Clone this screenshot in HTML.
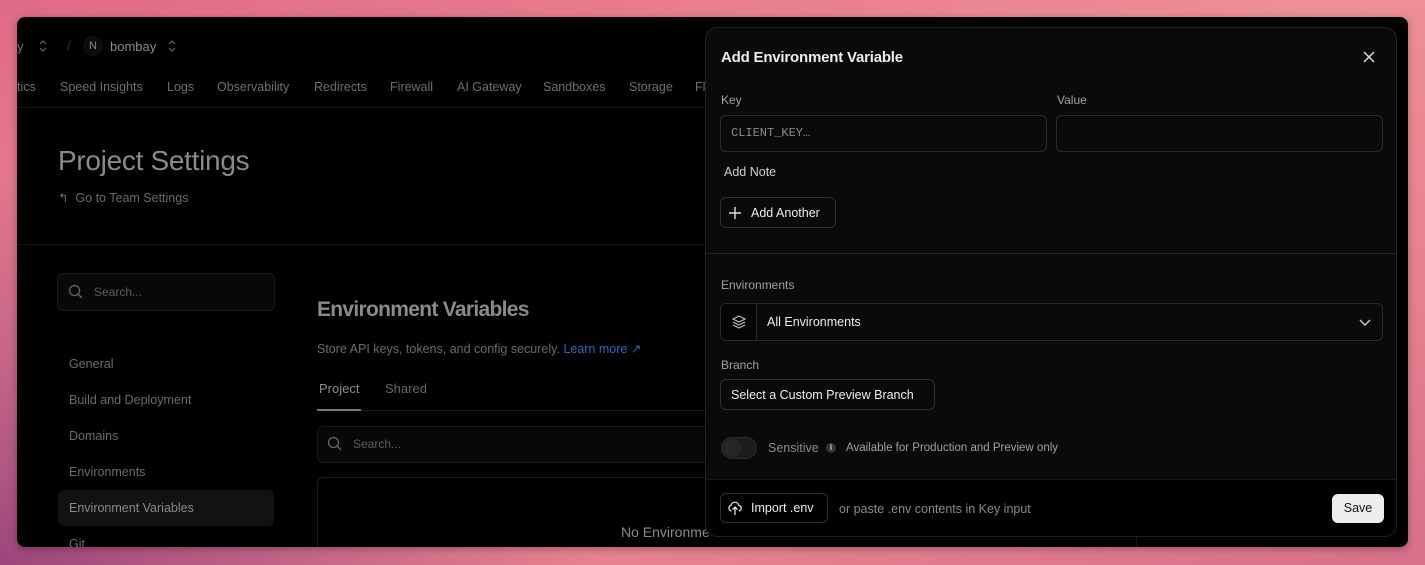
<!DOCTYPE html>
<html><head><meta charset="utf-8"><style>
*{box-sizing:border-box;margin:0;padding:0}
body{width:1425px;height:565px;overflow:hidden;font-family:"Liberation Sans",sans-serif;background:linear-gradient(160deg,#e06a86 0%,#ee8f96 45%,#e9838f 70%,#d8708a 100%);position:relative}
.bgl{position:absolute;left:0;top:0;width:1425px;height:565px;background:radial-gradient(ellipse 600px 400px at 0% 100%,rgba(130,45,115,.75),rgba(130,45,115,0))}
.win{position:absolute;left:17px;top:17px;width:1391px;height:530px;background:#000;border-radius:8px;overflow:hidden;box-shadow:0 2px 8px rgba(0,0,0,.3)}
.a{position:absolute;white-space:nowrap}
.nav{color:#6e6e6e;font-size:12.5px;top:63px}
.side{color:#6a6a6a;font-size:12.5px;left:52px}
.modal{position:absolute;left:688px;top:10px;width:692px;height:510px;background:#0a0a0a;border:1px solid #222;border-radius:12px;overflow:hidden}
.lbl{color:#a1a1a1;font-size:12px}
.inp{position:absolute;border:1px solid #2a2a2a;border-radius:6px;background:#0a0a0a}
.btn{position:absolute;border:1px solid #2e2e2e;border-radius:6px;background:#0a0a0a;color:#ededed;font-size:12.5px}
</style></head><body>
<div class="bgl"></div>
<div class="win">
 <div class="a" style="left:0;top:22px;color:#777;font-size:13px">y</div>
 <svg class="a" style="left:21px;top:22px" width="10" height="14" viewBox="0 0 10 14"><path d="M2 5L5 2L8 5M2 9L5 12L8 9" fill="none" stroke="#666" stroke-width="1.2"/></svg>
 <div class="a" style="left:50px;top:20px;color:#333;font-size:14px">/</div>
 <div class="a" style="left:66px;top:19px;width:20px;height:20px;border-radius:50%;background:#0d0d0d;color:#888;font-size:11px;text-align:center;line-height:20px">N</div>
 <div class="a" style="left:93px;top:22px;color:#8a8a8a;font-size:13px">bombay</div>
 <svg class="a" style="left:150px;top:22px" width="10" height="14" viewBox="0 0 10 14"><path d="M2 5L5 2L8 5M2 9L5 12L8 9" fill="none" stroke="#666" stroke-width="1.2"/></svg>
 <div class="a nav" style="left:0">tics</div>
 <div class="a nav" style="left:43px">Speed Insights</div>
 <div class="a nav" style="left:150px">Logs</div>
 <div class="a nav" style="left:200px">Observability</div>
 <div class="a nav" style="left:297px">Redirects</div>
 <div class="a nav" style="left:373px">Firewall</div>
 <div class="a nav" style="left:440px">AI Gateway</div>
 <div class="a nav" style="left:526px">Sandboxes</div>
 <div class="a nav" style="left:612px">Storage</div>
 <div class="a nav" style="left:678px">Fl</div>
 <div class="a" style="left:0;top:90px;width:700px;height:1px;background:#151515"></div>
 <div class="a" style="left:41px;top:128px;color:#8a8a8a;font-size:28px;letter-spacing:-.3px">Project Settings</div>
 <div class="a" style="left:41px;top:173px;color:#6a6a6a;font-size:12.5px">↰&nbsp; Go to Team Settings</div>
 <div class="a" style="left:0;top:227px;width:700px;height:1px;background:#151515"></div>
 <div class="a" style="left:40px;top:256px;width:218px;height:38px;border:1px solid #1a1a1a;border-radius:6px;background:#080808"></div>
 <svg class="a" style="left:51px;top:267px" width="15" height="15" viewBox="0 0 15 15"><circle cx="6.5" cy="6.5" r="5" fill="none" stroke="#666" stroke-width="1.3"/><path d="M10 10L14 14" stroke="#666" stroke-width="1.3"/></svg>
 <div class="a" style="left:77px;top:268px;color:#5e5e5e;font-size:12px">Search...</div>
 <div class="a side" style="top:340px">General</div>
 <div class="a side" style="top:376px">Build and Deployment</div>
 <div class="a side" style="top:412px">Domains</div>
 <div class="a side" style="top:448px">Environments</div>
 <div class="a" style="left:41px;top:473px;width:216px;height:36px;background:#121212;border-radius:6px"></div>
 <div class="a side" style="top:484px;color:#8a8a8a">Environment Variables</div>
 <div class="a side" style="top:520px">Git</div>
 <div class="a" style="left:300px;top:281px;color:#8a8a8a;font-size:21px;font-weight:bold;letter-spacing:-.7px">Environment Variables</div>
 <div class="a" style="left:300px;top:324px;color:#6a6a6a;font-size:12.5px">Store API keys, tokens, and config securely. <span style="color:#2a6bb8">Learn more ↗</span></div>
 <div class="a" style="left:302px;top:364px;color:#8a8a8a;font-size:13px">Project</div>
 <div class="a" style="left:368px;top:364px;color:#666;font-size:13px">Shared</div>
 <div class="a" style="left:300px;top:393px;width:400px;height:1px;background:#1a1a1a"></div>
 <div class="a" style="left:300px;top:392px;width:44px;height:2px;background:#777"></div>
 <div class="a" style="left:300px;top:409px;width:400px;height:37px;border:1px solid #1a1a1a;border-radius:6px;background:#080808"></div>
 <svg class="a" style="left:310px;top:419px" width="15" height="15" viewBox="0 0 15 15"><circle cx="6.5" cy="6.5" r="5" fill="none" stroke="#666" stroke-width="1.3"/><path d="M10 10L14 14" stroke="#666" stroke-width="1.3"/></svg>
 <div class="a" style="left:336px;top:420px;color:#5e5e5e;font-size:12px">Search...</div>
 <div class="a" style="left:300px;top:460px;width:820px;height:80px;border:1px solid #1a1a1a;border-radius:6px"></div>
 <div class="a" style="left:604px;top:507px;color:#8a8a8a;font-size:14px">No Environme</div>
 <div class="modal">
  <div class="a" style="left:15px;top:21px;color:#ededed;font-size:15px;font-weight:bold;letter-spacing:-.2px">Add Environment Variable</div>
  <svg class="a" style="left:656px;top:22px" width="14" height="14" viewBox="0 0 14 14"><path d="M2 2L12 12M12 2L2 12" stroke="#ddd" stroke-width="1.5"/></svg>
  <div class="a lbl" style="left:15px;top:65px">Key</div>
  <div class="a lbl" style="left:351px;top:65px">Value</div>
  <div class="inp" style="left:14px;top:87px;width:327px;height:37px"></div>
  <div class="a" style="left:25px;top:98px;color:#8a8a8a;font-size:12px;font-family:'Liberation Mono',monospace">CLIENT_KEY…</div>
  <div class="inp" style="left:350px;top:87px;width:327px;height:37px"></div>
  <div class="a" style="left:18px;top:137px;color:#cfcfcf;font-size:12.5px">Add Note</div>
  <div class="btn" style="left:14px;top:169px;width:116px;height:31px"><svg class="a" style="left:7px;top:8px" width="14" height="14" viewBox="0 0 14 14"><path d="M7 1V13M1 7H13" stroke="#ddd" stroke-width="1.4"/></svg><span class="a" style="left:30px;top:8px">Add Another</span></div>
  <div class="a" style="left:0;top:225px;width:692px;height:1px;background:#262626"></div>
  <div class="a lbl" style="left:15px;top:250px">Environments</div>
  <div class="inp" style="left:14px;top:275px;width:663px;height:38px;overflow:hidden"><div class="a" style="left:0;top:0;width:36px;height:38px;background:#050505;border-right:1px solid #2a2a2a"></div>
   <svg class="a" style="left:10px;top:11px" width="16" height="14" viewBox="0 0 16 14"><path d="M8 1L14 4L8 7L2 4Z M2 7L8 10L14 7 M2 10L8 13L14 10" fill="none" stroke="#bbb" stroke-width="1.2"/></svg>
   <span class="a" style="left:46px;top:11px;color:#ededed;font-size:12.5px">All Environments</span>
   <svg class="a" style="left:638px;top:13px" width="12" height="10" viewBox="0 0 12 10"><path d="M1 3L6 8L11 3" fill="none" stroke="#ccc" stroke-width="1.4"/></svg></div>
  <div class="a lbl" style="left:15px;top:330px">Branch</div>
  <div class="btn" style="left:14px;top:351px;width:215px;height:31px"><span class="a" style="left:10px;top:8px">Select a Custom Preview Branch</span></div>
  <div class="a" style="left:15px;top:409px;width:36px;height:22px;border-radius:11px;background:#1c1c1c;border:1px solid #2a2a2a"><div class="a" style="left:1px;top:1px;width:18px;height:18px;border-radius:50%;background:#262626"></div></div>
  <div class="a" style="left:62px;top:413px;color:#8a8a8a;font-size:12.5px">Sensitive</div>
  <div class="a" style="left:120px;top:415px;width:10px;height:10px;border-radius:50%;background:#333;color:#ddd;font-size:8px;text-align:center;line-height:10px;font-weight:bold">i</div>
  <div class="a" style="left:140px;top:414px;color:#a1a1a1;font-size:11.5px">Available for Production and Preview only</div>
  <div class="a" style="left:0;top:451px;width:692px;height:60px;background:#000;border-top:1px solid #1a1a1a"></div>
  <div class="btn" style="left:14px;top:465px;width:108px;height:30px;background:#000"><svg class="a" style="left:6px;top:6px" width="16" height="16" viewBox="0 0 16 16"><path d="M4.5 11A3 3 0 0 1 4 5.2A4 4 0 0 1 11.8 5.5A2.8 2.8 0 0 1 12 11M8 7V15M5.5 9.5L8 7L10.5 9.5" fill="none" stroke="#ddd" stroke-width="1.3"/></svg><span class="a" style="left:30px;top:7px">Import .env</span></div>
  <div class="a" style="left:133px;top:474px;color:#8a8a8a;font-size:12.5px">or paste .env contents in Key input</div>
  <div class="a" style="left:626px;top:466px;width:52px;height:29px;border-radius:6px;background:#ededed;color:#111;font-size:12.5px;text-align:center;line-height:29px">Save</div>
 </div>
</div>
</body></html>
